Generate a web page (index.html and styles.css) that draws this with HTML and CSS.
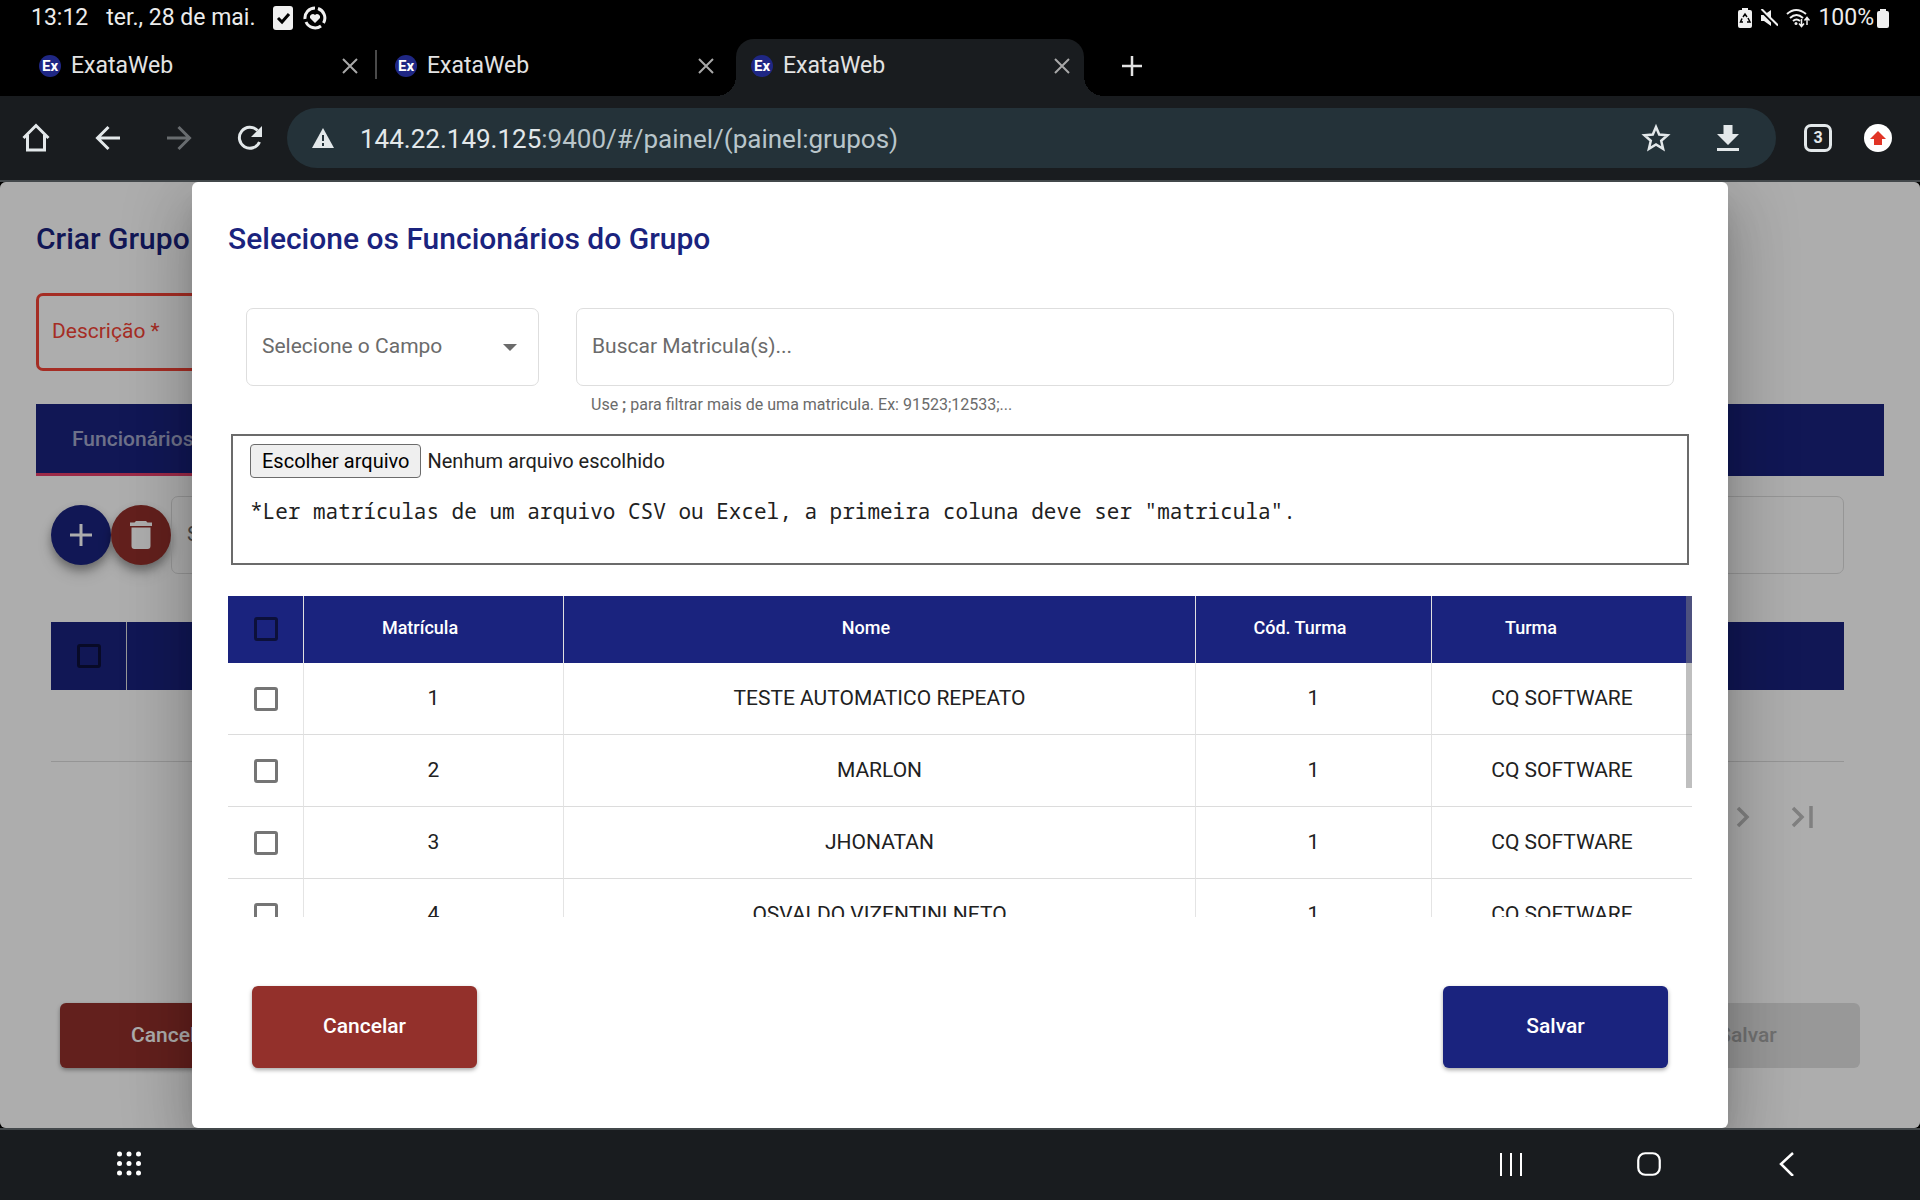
FILE: index.html
```html
<!DOCTYPE html>
<html lang="pt-BR">
<head>
<meta charset="utf-8">
<meta name="viewport" content="width=device-width, initial-scale=1">
<title>ExataWeb</title>
<link rel="stylesheet" href="styles.css">
</head>
<body>
<header class="chrome">
  <div class="status">
    <span>13:12</span>
    <span>ter., 28 de mai.</span>
    <span class="status-icons">
      <svg width="20" height="24" viewBox="0 0 20 24"><rect width="20" height="24" rx="3" fill="#f0f0f0"/><path d="M5 12l4 4 7-8" fill="none" stroke="#000" stroke-width="3"/></svg>
      <svg width="24" height="24" viewBox="0 0 24 24"><path d="M15 2.500A10 10 0 0 1 20.500 17M18 20A10 10 0 0 1 3 16M2 13A10 10 0 0 1 12 2" fill="none" stroke="#f0f0f0" stroke-width="3"/><path d="M12 17l-5-5a3 3 0 0 1 5-3 3 3 0 0 1 5 3z" fill="#f0f0f0"/></svg>
    </span>
    <span class="status-right">
      <svg width="14" height="20" viewBox="0 0 14 20"><path d="M4 2V0h6v2h2a2 2 0 0 1 2 2v14a2 2 0 0 1-2 2H2a2 2 0 0 1-2-2V4a2 2 0 0 1 2-2z" fill="#f0f0f0"/><path d="M5 9l2-3 2 3M10 10l2 4H9M5 14H2.500L4 10.500" fill="none" stroke="#000" stroke-width="1.500"/></svg>
      <svg width="18" height="18" viewBox="0 0 18 18"><path d="M1 6h3l7-5v16l-7-5H1z" fill="#f0f0f0"/><path d="M0 1l16 16" stroke="#000" stroke-width="2"/><path d="M1.500 0L18 16.500" stroke="#f0f0f0" stroke-width="2"/></svg>
      <svg width="24" height="20" viewBox="0 0 24 20"><g fill="none" stroke="#f0f0f0" stroke-width="2"><path d="M1 6Q10-2 20 6M4 10q6.500-6 13 0M7 13q3.500-3 7 0"/><path d="M15.500 11v7M13 15.500l2.500 3 2.500-3M21 17v-7M18.500 12.500L21 9.500l2.500 3" stroke-width="1.500"/></g><circle cx="10" cy="15.500" r="1.500" fill="#f0f0f0"/></svg>
      <span class="battery">100%
      <svg width="12" height="19" viewBox="0 0 12 19"><path d="M3 2V0h6v2h1a2 2 0 0 1 2 2v13a2 2 0 0 1-2 2H2a2 2 0 0 1-2-2V4a2 2 0 0 1 2-2z" fill="#f0f0f0"/></svg></span>
    </span>
  </div>
  <nav class="tabs" aria-label="Abas">
    <div class="tab tab-sep"><span class="fav">Ex</span><span class="tab-name">ExataWeb</span><button class="icon-btn" aria-label="Fechar aba"><svg width="16" height="16" viewBox="0 0 16 16"><path d="M1 1l14 14M15 1L1 15" stroke="#a8a8a8" stroke-width="2"/></svg></button></div>
    <div class="tab"><span class="fav">Ex</span><span class="tab-name">ExataWeb</span><button class="icon-btn" aria-label="Fechar aba"><svg width="16" height="16" viewBox="0 0 16 16"><path d="M1 1l14 14M15 1L1 15" stroke="#a8a8a8" stroke-width="2"/></svg></button></div>
    <div class="tab active"><span class="fav">Ex</span><span class="tab-name">ExataWeb</span><button class="icon-btn" aria-label="Fechar aba"><svg width="16" height="16" viewBox="0 0 16 16"><path d="M1 1l14 14M15 1L1 15" stroke="#a8a8a8" stroke-width="2"/></svg></button></div>
    <button class="icon-btn new-tab" aria-label="Nova aba"><svg width="20" height="20" viewBox="0 0 20 20"><path d="M10 0v20M0 10h20" stroke="#e3e3e3" stroke-width="2.500"/></svg></button>
  </nav>
  <div class="toolbar">
    <div class="nav-btns">
      <button class="icon-btn" aria-label="Início"><svg width="28" height="30" viewBox="0 0 28 30"><path d="M5.500 12v15h17V12M1.500 15L14 2.500 26.500 15" fill="none" stroke="#e3e8ea" stroke-width="3"/></svg></button>
      <button class="icon-btn" aria-label="Voltar"><svg width="26" height="26" viewBox="0 0 26 26"><path d="M25 13H3M13.500 2l-11 11 11 11" fill="none" stroke="#e3e8ea" stroke-width="3"/></svg></button>
      <button class="icon-btn" aria-label="Avançar"><svg width="26" height="26" viewBox="0 0 26 26"><path d="M1 13h22M12.500 2l11 11-11 11" fill="none" stroke="#686c6f" stroke-width="3"/></svg></button>
      <button class="icon-btn" aria-label="Recarregar"><svg width="26" height="26" viewBox="0 0 26 26"><path d="M22.500 17A10.500 10.500 0 1 1 20.500 5.500" fill="none" stroke="#e3e8ea" stroke-width="3"/><path d="M25 1v11H14z" fill="#e3e8ea"/></svg></button>
    </div>
    <div class="url">
      <svg width="22" height="20" viewBox="0 0 22 20"><path d="M11 0l11 20H0z" fill="#e3e8ea"/><path d="M11 7v6M11 15v3" stroke="#243239" stroke-width="2"/></svg>
      <a class="address" href="#/painel/(painel:grupos)"><span class="host">144.22.149.125</span>:9400/#/painel/(painel:grupos)</a>
      <button class="icon-btn" aria-label="Favoritar"><svg width="30" height="30" viewBox="0 0 30 30"><path d="M15 4l3.200 7.600 8.300.7-6.300 5.400 1.900 8.100L15 21.500l-7.100 4.300 1.900-8.100-6.300-5.400 8.300-.7z" fill="none" stroke="#e3e8ea" stroke-width="2.500"/></svg></button>
      <button class="icon-btn" aria-label="Baixar"><svg width="22" height="28" viewBox="0 0 22 28"><path d="M6.500 1h9v9H22L11 21 0 10h6.500zM0 24h22v3H0z" fill="#e3e8ea"/></svg></button>
    </div>
    <button class="tab-count" aria-label="3 abas">3</button>
    <button class="update" aria-label="Atualizar"><svg width="16" height="14" viewBox="0 0 16 14"><path d="M8 0l8 8h-4v6H4V8H0z" fill="#e13426"/></svg></button>
  </div>
</header>

<main class="viewport">
  <section class="page" aria-label="Criar Grupo">
    <h1 class="heading">Criar Grupo</h1>
    <input class="desc" aria-label="Descrição" placeholder="Descrição *">
    <div class="page-tabs"><button class="page-tab">Funcionários</button></div>
    <div class="page-body">
      <div class="actions">
        <button class="fab" aria-label="Adicionar"><svg width="24" height="24" viewBox="0 0 24 24"><path d="M12 1v22M1 12h22" stroke="#fff" stroke-width="3"/></svg></button>
        <button class="fab fab-red" aria-label="Excluir"><svg width="22" height="28" viewBox="0 0 22 28"><path d="M6 0h10l1.500 1.500H22V5H0V1.500h4.500zM1.500 6.500h19V25a3 3 0 0 1-3 3h-13a3 3 0 0 1-3-3z" fill="#fff"/></svg></button>
        <input class="field grow" aria-label="Selecione" placeholder="Selecione">
      </div>
      <div class="page-head"><span class="page-check"><input type="checkbox" class="check" aria-label="Selecionar todos os itens"></span></div>
      <div class="page-empty"></div>
      <div class="pager">
        <button class="icon-btn" aria-label="Próxima página"><svg width="14" height="22" viewBox="0 0 14 22"><path d="M2 2l9 9-9 9" fill="none" stroke="#bdbdbd" stroke-width="3.500"/></svg></button>
        <button class="icon-btn" aria-label="Última página"><svg width="22" height="22" viewBox="0 0 22 22"><path d="M2 2l9 9-9 9M20 0v22" fill="none" stroke="#bdbdbd" stroke-width="3.500"/></svg></button>
      </div>
    </div>
    <div class="page-foot"><button class="btn btn-red">Cancelar</button><button class="btn btn-off" disabled>Salvar</button></div>
  </section>

  <div class="backdrop">
    <section class="dialog" role="dialog" aria-modal="true" aria-labelledby="dlg-title">
      <h2 class="heading" id="dlg-title">Selecione os Funcionários do Grupo</h2>
      <div class="filters">
        <div class="select">
          <select class="field" aria-label="Selecione o Campo"><option>Selecione o Campo</option></select>
          <svg class="caret" width="14" height="7" viewBox="0 0 14 7"><path d="M0 0h14L7 7z" fill="#6b6b6b"/></svg>
        </div>
        <div class="search">
          <input class="field" aria-label="Buscar Matricula(s)" placeholder="Buscar Matricula(s)...">
          <p class="hint">Use <b>;</b> para filtrar mais de uma matricula. Ex: 91523;12533;...</p>
        </div>
      </div>
      <div class="upload">
        <label class="file"><input type="file" class="file-input"><span class="file-btn">Escolher arquivo</span><span>Nenhum arquivo escolhido</span></label>
        <p class="mono">*Ler matrículas de um arquivo CSV ou Excel, a primeira coluna deve ser "matricula".</p>
      </div>
      <div class="scroller">
        <table class="grid">
          <colgroup><col class="c-check"><col class="c-wide"><col><col class="c-code"><col class="c-wide"></colgroup>
          <thead><tr><th><input type="checkbox" class="check" aria-label="Selecionar todos"></th><th>Matrícula</th><th>Nome</th><th>Cód. Turma</th><th>Turma</th></tr></thead>
          <tbody>
            <tr><td><input type="checkbox" class="check" aria-label="Selecionar 1"></td><td>1</td><td>TESTE AUTOMATICO REPEATO</td><td>1</td><td>CQ SOFTWARE</td></tr>
            <tr><td><input type="checkbox" class="check" aria-label="Selecionar 2"></td><td>2</td><td>MARLON</td><td>1</td><td>CQ SOFTWARE</td></tr>
            <tr><td><input type="checkbox" class="check" aria-label="Selecionar 3"></td><td>3</td><td>JHONATAN</td><td>1</td><td>CQ SOFTWARE</td></tr>
            <tr><td><input type="checkbox" class="check" aria-label="Selecionar 4"></td><td>4</td><td>OSVALDO VIZENTINI NETO</td><td>1</td><td>CQ SOFTWARE</td></tr>
          </tbody>
        </table>
        <span class="thumb"></span>
      </div>
      <div class="dialog-foot"><button class="btn btn-tall btn-red">Cancelar</button><button class="btn btn-tall">Salvar</button></div>
    </section>
  </div>
</main>

<footer class="sysnav">
  <button class="icon-btn" aria-label="Aplicativos"><svg width="24" height="26" viewBox="0 0 24 26" fill="#fff"><circle cx="2.500" cy="3" r="2.500"/><circle cx="12" cy="3" r="2.500"/><circle cx="21.500" cy="3" r="2.500"/><circle cx="2.500" cy="12.500" r="2.500"/><circle cx="12" cy="12.500" r="2.500"/><circle cx="21.500" cy="12.500" r="2.500"/><circle cx="2.500" cy="22" r="2.500"/><circle cx="12" cy="22" r="2.500"/><circle cx="21.500" cy="22" r="2.500"/></svg></button>
  <div class="sys-right">
    <button class="icon-btn" aria-label="Recentes"><svg width="24" height="24" viewBox="0 0 24 24"><path d="M2 1v23M12 1v23M22 1v23" stroke="#fff" stroke-width="2"/></svg></button>
    <button class="icon-btn" aria-label="Início"><svg width="24" height="24" viewBox="0 0 24 24"><rect x="1.250" y="1.250" width="21.500" height="21.500" rx="7" fill="none" stroke="#fff" stroke-width="2.200"/></svg></button>
    <button class="icon-btn" aria-label="Voltar"><svg width="24" height="24" viewBox="0 0 24 24"><path d="M18 1L6 12l12 12" fill="none" stroke="#fff" stroke-width="2.500"/></svg></button>
  </div>
</footer>
</body>
</html>
```
FILE: styles.css
```css
* { box-sizing: border-box; }
body {
  margin: 0;
  min-height: 100vh;
  display: flex;
  flex-direction: column;
  background: #000;
  color: #212121;
  font: 21px/24px Roboto, sans-serif;
}
button, input, select { font: inherit; margin: 0; }
svg { display: block; flex: none; }
.icon-btn { border: 0; padding: 0; background: none; }

/* Browser chrome */
.status {
  display: flex;
  align-items: center;
  gap: 18px;
  height: 39px;
  padding: 0 31px 3px;
  color: #ececec;
  font-size: 23px;
}
.status-icons { display: flex; gap: 10px; }
.status-right { display: flex; align-items: center; gap: 8px; margin-left: auto; }
.battery { display: flex; align-items: center; gap: 3px; }

.tabs { display: flex; height: 57px; padding-left: 24px; color: #e3e3e3; font-size: 23px; }
.tab {
  position: relative;
  display: flex;
  align-items: center;
  gap: 10px;
  width: 348px;
  margin-right: 8px;
  padding: 0 14px 4px 15px;
}
.tab-name { flex: 1; }
.tab-sep::after {
  content: "";
  position: absolute;
  right: -5px;
  top: 11px;
  width: 2px;
  height: 29px;
  background: #4a4a4a;
}
.fav {
  display: flex;
  align-items: center;
  justify-content: center;
  width: 22px;
  height: 22px;
  border-radius: 50%;
  background: #1f2784;
  color: #fff;
  font-size: 15px;
  font-weight: 700;
}
.active { background: #191c1f; border-radius: 18px 18px 0 0; }
.active::before, .active::after {
  content: "";
  position: absolute;
  bottom: 0;
  width: 20px;
  height: 20px;
}
.active::before { right: 100%; background: radial-gradient(circle at 0 0, transparent 20px, #191c1f 20px); }
.active::after { left: 100%; background: radial-gradient(circle at 100% 0, transparent 20px, #191c1f 20px); }
.new-tab { margin-left: 30px; padding-bottom: 4px; }

.toolbar {
  display: flex;
  align-items: center;
  height: 86px;
  padding: 0 28px 0 22px;
  background: #191c1f;
  border-bottom: 2px solid #43484b;
}
.nav-btns { display: flex; align-items: center; gap: 45px; margin-right: 24px; }
.url {
  flex: 1;
  display: flex;
  align-items: center;
  gap: 46px;
  height: 60px;
  padding: 0 37px 0 25px;
  border-radius: 30px;
  background: #243239;
  font-size: 26px;
  line-height: 36px;
}
.address { flex: 1; margin-left: -20px; padding-top: 2px; color: #b9c5ca; text-decoration: none; }
.host { color: #e3e8ea; }
.tab-count {
  width: 28px;
  height: 28px;
  margin: 0 32px 0 28px;
  padding: 0;
  border: 3px solid #e3e8ea;
  border-radius: 7px;
  background: none;
  color: #e3e8ea;
  font-size: 16px;
  font-weight: 700;
  line-height: 20px;
}
.update {
  display: flex;
  align-items: center;
  justify-content: center;
  width: 28px;
  height: 28px;
  padding: 0;
  border: 0;
  border-radius: 50%;
  background: #fff;
}

/* Page behind the dialog */
.viewport {
  position: relative;
  flex: 1;
  display: flex;
  overflow: hidden;
  border-radius: 6px;
}
.page { flex: 1; display: flex; flex-direction: column; padding: 39px 36px 60px; background: #fff; }
.heading { margin: 0; color: #1a237e; font-size: 30px; font-weight: 500; line-height: 36px; }
.desc {
  width: 50%;
  height: 78px;
  margin-top: 36px;
  padding: 0 13px 2px;
  border: 3px solid #f44336;
  border-radius: 7px;
  background: none;
}
.desc::placeholder { color: #f44336; opacity: 1; }
.page-tabs { display: flex; height: 72px; margin-top: 33px; background: #1a237e; }
.page-tab {
  padding: 0 36px;
  border: 0;
  border-bottom: 3px solid #e8406a;
  background: none;
  color: #a3a7cb;
  font-weight: 500;
}
.page-body { padding: 20px 40px 0 15px; }
.actions { display: flex; align-items: center; height: 78px; }
.fab {
  display: flex;
  align-items: center;
  justify-content: center;
  width: 60px;
  height: 60px;
  padding: 0;
  border: 0;
  border-radius: 50%;
  background: #1a237e;
  box-shadow: 0 5px 8px rgba(0, 0, 0, .3), 0 9px 15px rgba(0, 0, 0, .14);
}
.fab-red { background: #93302b; }
.grow { flex: 1; }
.page-head { display: flex; height: 68px; margin-top: 48px; background: #1a237e; }
.page-check { display: flex; align-items: center; justify-content: center; width: 76px; border-right: 1px solid #e0e0e0; }
.page-head .check { border-color: #0c103a; }
.page-empty { height: 72px; border-bottom: 1px solid #dcdcdc; }
.pager { display: flex; justify-content: flex-end; gap: 41px; padding: 44px 31px 0 0; }
.page-foot { display: flex; justify-content: space-between; margin-top: auto; padding: 0 24px; }

.btn {
  width: 225px;
  height: 65px;
  padding: 0 0 2px;
  border: 0;
  border-radius: 6px;
  background: #1a237e;
  color: #fff;
  font-weight: 500;
  box-shadow: 0 2px 4px rgba(0, 0, 0, .35);
}
.btn-tall { height: 82px; }
.btn-red { background: #93302b; }
.btn-off { background: #e0e0e0; color: #a6a6a6; box-shadow: none; }

/* Dialog */
.backdrop {
  position: absolute;
  inset: 0;
  display: flex;
  justify-content: center;
  background: rgba(0, 0, 0, .32);
}
.dialog {
  display: flex;
  flex-direction: column;
  width: 80%;
  padding: 39px 36px 60px;
  border-radius: 6px;
  background: #fff;
  box-shadow: 0 16px 22px -10px rgba(0, 0, 0, .2), 0 36px 57px 4px rgba(0, 0, 0, .14), 0 13px 69px 12px rgba(0, 0, 0, .12);
}
.filters { display: flex; gap: 37px; margin-top: 51px; padding: 0 18px; }
.select { display: grid; align-items: center; width: 293px; height: 78px; }
.select > * { grid-area: 1 / 1; }
.caret { justify-self: end; margin-right: 22px; pointer-events: none; }
.field {
  width: 100%;
  height: 78px;
  padding: 0 15px 2px;
  border: 1px solid #dedede;
  border-radius: 7px;
  background: none;
  color: #6b6b6b;
  appearance: none;
}
.field::placeholder { color: #6b6b6b; opacity: 1; }
.search { flex: 1; }
.hint { margin: 9px 0 0 15px; color: #6b6b6b; font-size: 16px; line-height: 20px; }

.upload { height: 131px; margin: 19px 3px 0; padding: 8px 17px; border: 2px solid #6b6b6b; }
.file { display: flex; align-items: center; gap: 6px; width: max-content; font-size: 20px; }
.file-input { position: absolute; width: 1px; height: 1px; opacity: 0; }
.file-btn {
  padding: 4px 11px;
  border: 1px solid #6b6b6b;
  border-radius: 4px;
  background: #efefef;
  color: #000;
}
.mono { margin: 19px 0 0; font: 21px/28px "Droid Sans Mono", "Noto Sans Mono", "DejaVu Sans Mono", monospace; }

.scroller { position: relative; height: 321px; margin-top: 31px; overflow: hidden; }
.grid { width: 100%; border-collapse: separate; border-spacing: 0; table-layout: fixed; text-align: center; }
.c-check { width: 76px; }
.c-wide { width: 260px; }
.c-code { width: 236px; }
.grid th {
  height: 67px;
  padding: 0 27px 4px 0;
  border-right: 1px solid #e0e0e0;
  background: #1a237e;
  color: #fff;
  font-size: 18px;
  font-weight: 500;
}
.grid th:first-child { padding: 0 0 2px; }
.grid th:last-child { padding-right: 62px; }
.grid td { height: 72px; padding: 0 0 2px; border-right: 1px solid #e4e4e4; border-bottom: 1px solid #dcdcdc; }
.grid td:first-child { padding: 0; }
.grid th:last-child, .grid td:last-child { border-right: 0; }
.check {
  display: block;
  width: 24px;
  height: 24px;
  margin: 0 auto;
  border: 3px solid #757575;
  border-radius: 3px;
  appearance: none;
}
.grid th .check { border-color: #0c103a; }
.thumb { position: absolute; top: 0; right: 0; width: 6px; height: 192px; background: rgba(128, 128, 128, .5); }
.dialog-foot { display: flex; justify-content: space-between; margin-top: auto; padding: 0 24px; }

/* System navigation */
.sysnav {
  display: flex;
  align-items: center;
  justify-content: space-between;
  height: 72px;
  padding: 0 121px 2px 117px;
  border-top: 2px solid #43484b;
  background: #191c1f;
}
.sys-right { display: flex; gap: 114px; }
```
